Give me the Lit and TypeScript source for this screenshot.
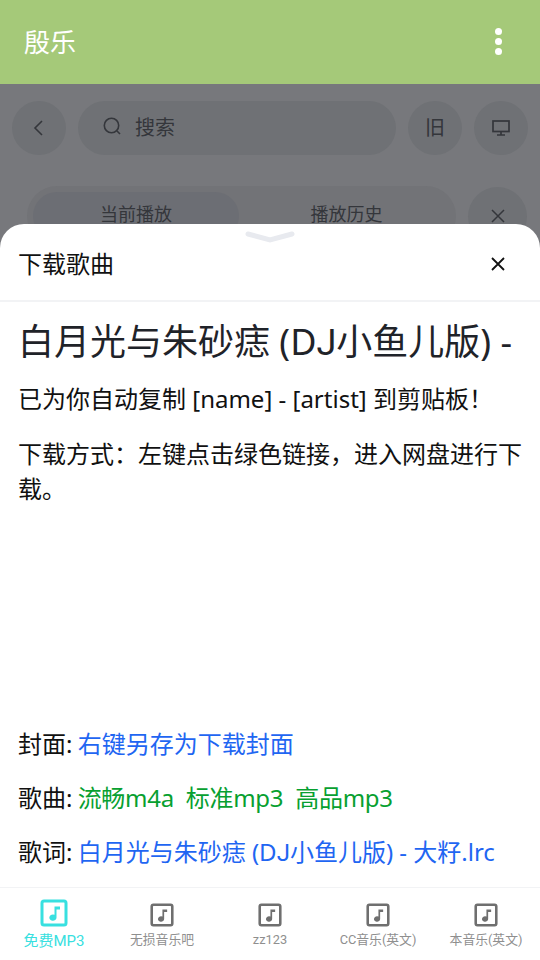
import { LitElement, html, css, svg } from "lit";
import { customElement } from "lit/decorators.js";

const note = svg`<rect x="2" y="2" width="24" height="24" rx="2" fill="none" stroke="currentColor" stroke-width="3"/><path d="M14.5 7.5h5.5v3h-3.5v8.2a3.6 3.2 0 1 1-2-2.9z" fill="currentColor"/>`;

const tabs = [
  { label: "免费MP3", active: true },
  { label: "无损音乐吧", active: false },
  { label: "zz123", active: false },
  { label: "CC音乐(英文)", active: false },
  { label: "本音乐(英文)", active: false },
];

@customElement("app-root")
export class AppRoot extends LitElement {
  static styles = css`
    :host {
      display: flex;
      flex-direction: column;
      width: 540px;
      height: 960px;
      overflow: hidden;
      font-family: "Noto Sans", "Noto Sans CJK SC", sans-serif;
      background: #77787c;
    }
    .appbar {
      flex: 0 0 84px;
      background: #a5c979;
      display: flex;
      align-items: center;
      justify-content: space-between;
      padding: 0 38px 3px 24px;
      color: #fff;
      font-size: 26px;
      box-sizing: border-box;
    }
    .title { font-family: "Noto Sans CJK SC", sans-serif; font-weight: 400; line-height: 1; }
    .dots { display: flex; flex-direction: column; gap: 3px; padding-top: 1px; }
    .dots i { width: 7px; height: 7px; border-radius: 50%; background: #fff; display: block; }
    .main { flex: 1; position: relative; min-height: 0; }
    .back { padding: 17px 12px 0 12px; display: flex; flex-direction: column; gap: 31px; color: #34363b; }
    .row { display: flex; gap: 12px; align-items: center; }
    .circle {
      width: 54px; height: 54px; border-radius: 50%; background: #6f7175; flex: none;
      display: flex; align-items: center; justify-content: center; font-size: 20px;
    }
    .search {
      flex: 1; height: 54px; border-radius: 27px; background: #6f7175;
      display: flex; align-items: center; gap: 13px; padding: 0 0 4px 24px; font-size: 20px;
      box-sizing: border-box;
    }
    .old { padding-bottom: 4px; box-sizing: border-box; }
    .row2 { padding: 0 1px 0 15px; gap: 12px; }
    .seg {
      flex: 1; height: 60px; border-radius: 30px; background: #727377;
      display: flex; padding: 6px; box-sizing: border-box; font-size: 18px;
    }
    .seg div { flex: 1; display: flex; justify-content: center; padding-top: 8px; border-radius: 24px; }
    .seg .on { flex: 0 0 206px; background: #6c6e74; }
    .seg .off { padding-left: 4px; }
    .circle.x { width: 59px; height: 59px; background: #6f7175; }
    .sheet {
      position: absolute; left: 0; right: 0; top: 140px; bottom: 0;
      background: #fff; border-radius: 24px 24px 0 0;
      display: flex; flex-direction: column; color: #111;
    }
    .handle { position: absolute; left: 245px; top: 7px; width: 50px; height: 12px; }
    .sheethead {
      flex: 0 0 78px; box-sizing: border-box; border-bottom: 2px solid #f2f3f5;
      display: flex; align-items: center; justify-content: space-between;
      padding: 3px 34px 0 18px; font-size: 24px;
    }
    .sheethead span { margin-bottom: 3px; }
    .content { flex: 1; padding: 0 14px 0 18px; display: flex; flex-direction: column; min-height: 0; }
    h1 {
      margin: 16px 0 0; font-size: 36px; font-weight: 400; line-height: 48px; color: #1f2329;
      white-space: nowrap;
    }
    p { margin: 0; font-size: 24px; line-height: 35px; }
    .p1 { margin-top: 14px; }
    .p2 { margin-top: 20px; }
    .links { margin-top: auto; padding-bottom: 16px; display: flex; flex-direction: column; gap: 19px; }
    .j { font-family: Roboto, sans-serif; }
    .blue { color: #1f66f2; margin-left: -1px; }
    .green { color: #07a030; margin-left: -1px; letter-spacing: -0.3px; }
    .green span { margin-right: 12px; }
    .tabs {
      flex: 0 0 73px; box-sizing: border-box; border-top: 1px solid #f2f3f5; display: grid;
      grid-template-columns: repeat(5, 1fr); font-family: Roboto, "Noto Sans CJK SC", sans-serif;
    }
    .tab {
      display: flex; flex-direction: column; align-items: center; color: #6f6f6f;
      padding-top: 15px; font-size: 12.8px; line-height: 18px; white-space: nowrap;
    }
    .tab svg { width: 24px; height: 24px; margin-bottom: 4px; }
    .tab span { color: #8f8f8f; }
    .tab.active { color: #38e0e0; padding-top: 11px; font-size: 15px; }
    .tab.active svg { width: 28px; height: 28px; margin-bottom: 5px; }
    .tab.active span { color: #38e0e0; }
  `;

  render() {
    return html`
      <div class="appbar">
        <span class="title">殷乐</span>
        <div class="dots"><i></i><i></i><i></i></div>
      </div>
      <div class="main">
        <div class="back">
          <div class="row">
            <div class="circle">
              <svg width="16" height="18" viewBox="0 0 16 18" fill="none" stroke="currentColor" stroke-width="1.6"><path d="M11 2 4 9l7 7"/></svg>
            </div>
            <div class="search">
              <svg width="20" height="20" viewBox="0 0 20 20" fill="none" stroke="currentColor" stroke-width="1.6"><circle cx="9.5" cy="9.5" r="7.2"/><path d="m15 15 3 3"/></svg>
              <span>搜索</span>
            </div>
            <div class="circle old">旧</div>
            <div class="circle">
              <svg width="20" height="18" viewBox="0 0 20 18" fill="none" stroke="currentColor" stroke-width="1.7"><rect x="2" y="2" width="16" height="10.5"/><path d="M10 13v3M6 16h8"/></svg>
            </div>
          </div>
          <div class="row row2">
            <div class="seg"><div class="on">当前播放</div><div class="off">播放历史</div></div>
            <div class="circle x">
              <svg width="16" height="16" viewBox="0 0 16 16" fill="none" stroke="currentColor" stroke-width="1.5"><path d="m2 2 12 12M14 2 2 14"/></svg>
            </div>
          </div>
        </div>
        <div class="sheet">
          <svg class="handle" viewBox="0 0 50 12" fill="none" stroke="#e8eaef" stroke-width="5" stroke-linecap="round"><path d="M3 3 25 9 47 3"/></svg>
          <div class="sheethead">
            <span>下载歌曲</span>
            <svg width="16" height="16" viewBox="0 0 16 16" fill="none" stroke="#111" stroke-width="1.8"><path d="m2 2 12 12M14 2 2 14"/></svg>
          </div>
          <div class="content">
            <h1>白月光与朱砂痣 (D<span class="j">J</span>小鱼儿版) -</h1>
            <p class="p1">已为你自动复制 [name] - [artist] 到剪贴板！</p>
            <p class="p2">下载方式：左键点击绿色链接，进入网盘进行下载。</p>
            <div class="links">
              <p>封面: <span class="blue">右键另存为下载封面</span></p>
              <p>歌曲: <span class="green"><span>流畅m4a</span><span>标准mp3</span><span>高品mp3</span></span></p>
              <p>歌词: <span class="blue">白月光与朱砂痣 (D<span class="j">J</span>小鱼儿版) - 大籽.lrc</span></p>
            </div>
          </div>
          <div class="tabs">
            ${tabs.map(
              (t) => html`<div class="tab ${t.active ? "active" : ""}">
                <svg viewBox="0 0 28 28">${note}</svg>
                <span>${t.label}</span>
              </div>`
            )}
          </div>
        </div>
      </div>
    `;
  }
}
